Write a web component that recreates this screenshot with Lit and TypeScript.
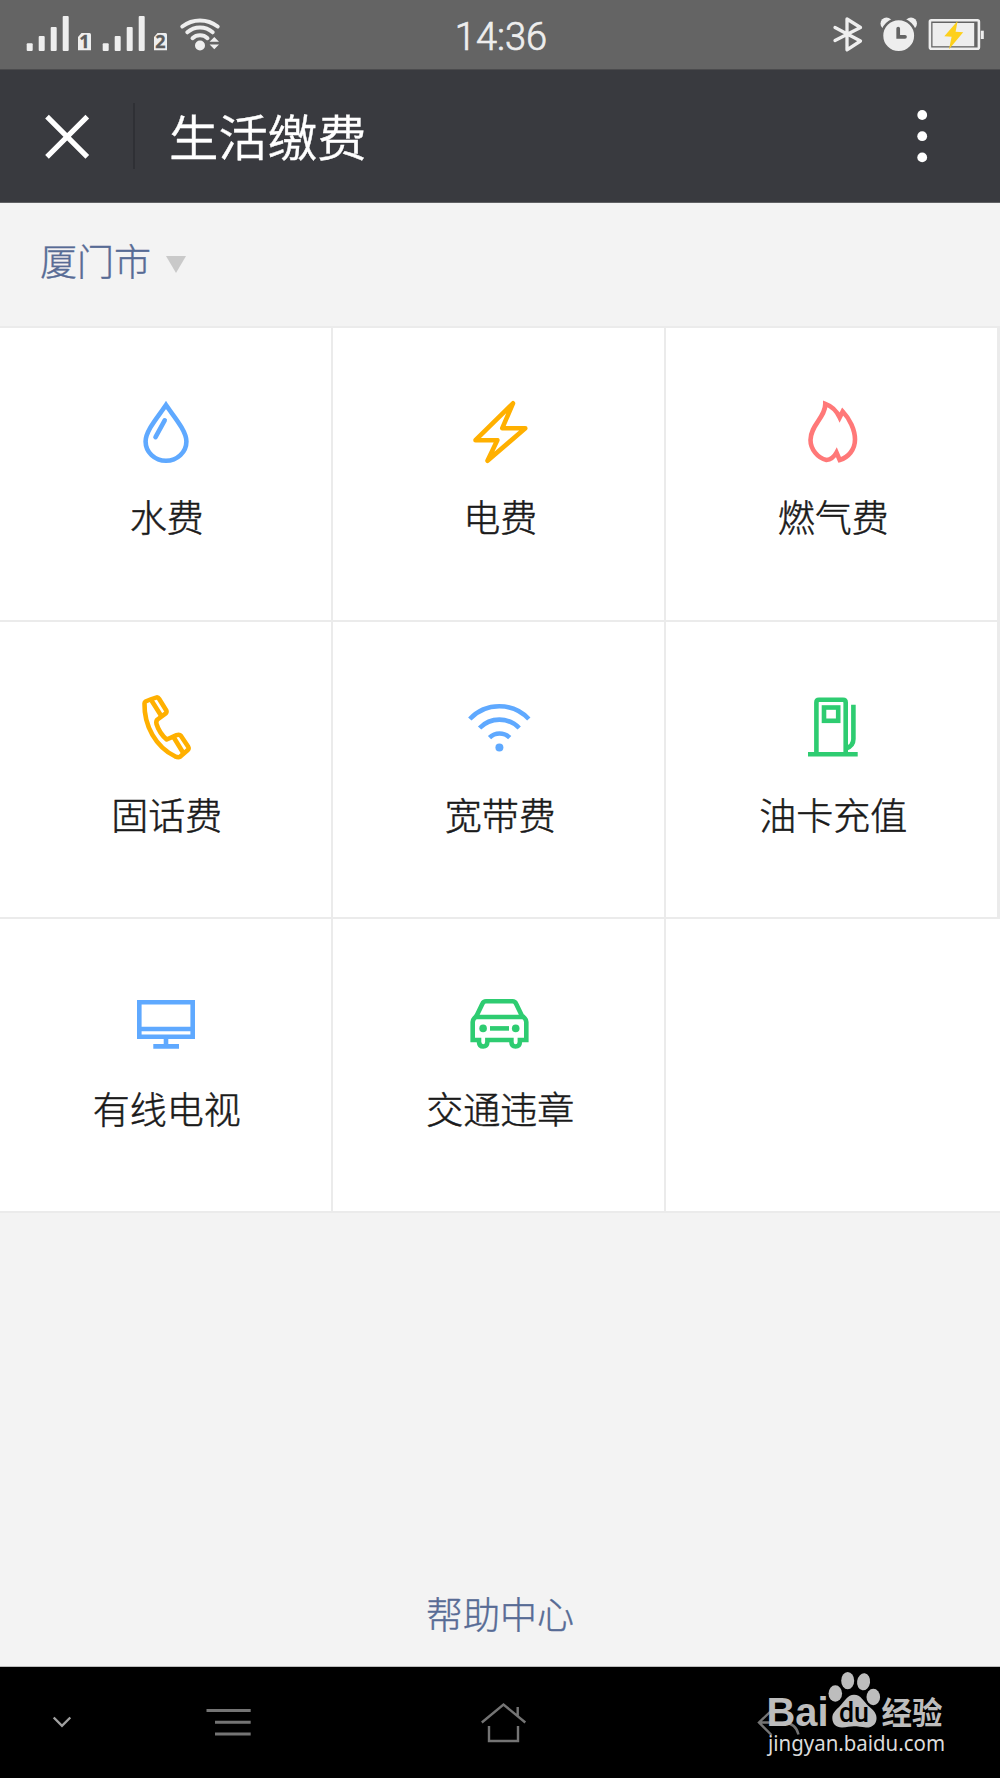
import { LitElement, html, css, svg } from "lit";
import { customElement, property } from "lit/decorators.js";

const BLUE = "#5fa9ff";
const AMBER = "#ffb000";
const CORAL = "#ff7878";
const GREEN = "#2ecc71";

const dropIcon = svg`
  <path d="M166 405C159 415.500 145.600 430.500 145.600 441.500A20.400 19.300 0 0 0 186.400 441.500C186.400 430.500 173 415.500 166 405Z"/>
  <path d="M164.700 420.300L155.500 437.200" stroke-linecap="round"/>`;
const boltIcon = svg`
  <path stroke-linejoin="round" d="M513 403.300L502.300 428.200H525.300L487.500 460.800L497.300 440.200H475.500Z"/>`;
const flameIcon = svg`
  <path stroke-miterlimit="3" d="M825.300 403.800C831.500 406 837 411.500 839.700 417.500L842.700 411.500C849.500 418.500 855 430 855 439.500C855 449.500 848.500 457.300 839.700 460L836.500 452.500C834 457 830 459.800 826.500 460C817.500 458 810.500 449 810.500 440C810.500 425 825.500 417.500 825.300 403.800Z"/>`;
const phoneIcon = svg`
  <path stroke-linejoin="round" d="M145.500 701.500Q151 699 156 697.600Q158 697 159.200 699L166.300 710.500Q167 712 165.700 713.300L157.500 719.500Q155.800 721 156.500 724C158.500 730.500 162 735.500 166.700 739.500L176.500 735.200Q179.500 734 181 736L188.200 746.800Q189.200 748.500 187.800 750L180 756.800Q178.300 757.800 175 756.300C156 747 144 726 144.500 703.500Q144.500 702.300 145.500 701.500Z"/>
  <path d="M151.500 700.500L161.300 716M173.500 737L183.300 753"/>`;
const wifiIcon = svg`
  <path d="M469.800 719A40.600 40.600 0 0 1 528.800 719M479.600 728A27.500 27.500 0 0 1 519.200 728M489.500 737.600A14.500 14.500 0 0 1 509.700 737.600"/>
  <circle cx="499.400" cy="747.400" r="4" fill=${BLUE} stroke="none"/>`;
const pumpIcon = svg`
  <path d="M816.400 754V702.500Q816.400 699.800 819 699.800H843Q845.700 699.800 845.700 702.500V754M808 754.200H857.700"/>
  <rect x="824" y="707.500" width="14.200" height="13.300"/>
  <path d="M853.400 704.700V739Q853.400 746 846 748.500"/>`;
const tvIcon = svg`
  <path d="M139.300 1002.300H192.700V1036.800H139.300ZM139.300 1029H192.700M166 1037V1046M153.300 1046.400H179"/>`;
const carIcon = svg`
  <path d="M476 1017L482.500 1003.500Q483.500 1001.200 486 1001.200H512.500Q515 1001.200 516 1003.500L522.500 1017M475.500 1017H523"/>
  <path d="M476.500 1016Q472.700 1019 472.700 1022V1040H479V1042Q479.300 1046.500 483.200 1046.500Q487.200 1046.500 487.400 1042V1040H511.400V1042Q511.600 1046.500 515.500 1046.500Q519.700 1046.500 519.900 1042V1040H526.300V1022Q526.300 1019 522.500 1016"/>
  <path d="M490 1028.400H509"/>
  <circle cx="483.100" cy="1028.400" r="3.800" fill=${GREEN} stroke="none"/>
  <circle cx="515.700" cy="1028.400" r="3.800" fill=${GREEN} stroke="none"/>`;

interface Service {
  label: string;
  color: string;
  box: string;
  icon: unknown;
}

const ROWS: { cls: string; items: Service[] }[] = [
  {
    cls: "first",
    items: [
      { label: "水费", color: BLUE, box: "130 396 72 72", icon: dropIcon },
      { label: "电费", color: AMBER, box: "464 396 72 72", icon: boltIcon },
      { label: "燃气费", color: CORAL, box: "797 396 72 72", icon: flameIcon },
    ],
  },
  {
    cls: "second",
    items: [
      { label: "固话费", color: AMBER, box: "130 692 72 72", icon: phoneIcon },
      { label: "宽带费", color: BLUE, box: "464 692 72 72", icon: wifiIcon },
      { label: "油卡充值", color: GREEN, box: "797 692 72 72", icon: pumpIcon },
    ],
  },
  {
    cls: "third",
    items: [
      { label: "有线电视", color: BLUE, box: "130 988 72 72", icon: tvIcon },
      { label: "交通违章", color: GREEN, box: "464 988 72 72", icon: carIcon },
    ],
  },
];

@customElement("status-bar")
class StatusBar extends LitElement {
  static styles = css`
    :host {
      display: grid;
      grid-template-columns: 1fr auto 1fr;
      height: 69px;
      background: #646464;
      border-bottom: 1px solid #4b4b4d;
      color: #eee;
    }
    svg { display: block; height: 69px; }
    .left { width: 210px; margin-left: 20px; }
    .right { width: 170px; margin-right: 10px; justify-self: end; }
    .sim { font: bold 18px "Noto Sans", sans-serif; fill: #5c5c5c; stroke: #5c5c5c; stroke-width: 0.3; }
    .time {
      font: 38px/66px Roboto, sans-serif;
      font-weight: 300;
      padding: 4px 0 0 2px;
      height: 65px;
      -webkit-text-stroke: 0.7px #eee;
    }
  `;

  private signal(dx: number, sim: string) {
    return svg`
      <g transform="translate(${dx} 0)">
        <g fill="#eee">
          <rect x="26.700" y="43.300" width="6" height="7.800" rx="1"/>
          <rect x="38.700" y="36" width="6" height="15" rx="1"/>
          <rect x="50.700" y="27" width="6" height="24" rx="1"/>
          <rect x="62.700" y="16" width="6" height="35" rx="1"/>
          <path d="M81.500 33H89.500Q91 33 91 34.500V50.300H78V37Z"/>
        </g>
        <text class="sim" x="84.300" y="48.300" text-anchor="middle">${sim}</text>
      </g>`;
  }

  render() {
    return html`
      <svg class="left" viewBox="20 0 210 69">
        ${this.signal(0, "1")} ${this.signal(76, "2")}
        <g fill="none" stroke="#eee" stroke-width="4" stroke-linecap="round">
          <path d="M182.300 26.500A29 29 0 0 1 217.700 26.500M187.300 32.300A19.500 19.500 0 0 1 212.700 32.300M192.500 38.200A11 11 0 0 1 207.500 38.200"/>
        </g>
        <circle cx="200" cy="45.500" r="5" fill="#eee"/>
        <path fill="#eee" d="M214.300 37L219 41.700H209.600ZM209.600 44.500H219L214.300 49.300Z"/>
      </svg>
      <div class="time">14:36</div>
      <svg class="right" viewBox="820 0 170 69">
        <path fill="none" stroke="#eee" stroke-width="3.300" stroke-linecap="round" stroke-linejoin="round"
          d="M835 27.500L860.500 41L847 49.800V19L860.500 27.500L835 40.500"/>
        <circle cx="886.500" cy="23.500" r="6" fill="#eee"/>
        <circle cx="911" cy="23.500" r="6" fill="#eee"/>
        <circle cx="898.700" cy="35.700" r="16.700" fill="#eee" stroke="#646464" stroke-width="2.600"/>
        <path fill="none" stroke="#646464" stroke-width="3.700" stroke-linecap="round" d="M898.200 28.500V36.800H905"/>
        <rect x="929.900" y="20.200" width="49" height="28.600" rx="1.500" fill="none" stroke="#eee" stroke-width="2.600"/>
        <rect x="932.500" y="23" width="41.700" height="23.200" fill="#eee"/>
        <rect x="980.800" y="30.700" width="3" height="8.300" fill="#eee"/>
        <path fill="#fdd01c" d="M957.600 21L944.300 36.300L951.600 36.800L949 49.200L963.200 32.300L955.600 31.700Z"/>
      </svg>
    `;
  }
}

@customElement("title-bar")
class TitleBar extends LitElement {
  static styles = css`
    :host {
      display: flex;
      align-items: center;
      height: 132px;
      background: #393a3f;
      border-bottom: 1px solid #606164;
      color: #fff;
    }
    svg { display: block; }
    .close { width: 50px; height: 50px; margin-left: 42px; margin-top: 2px; }
    .divider { width: 2px; height: 66px; margin-left: 41px; background: #2f3035; }
    .title {
      margin: 0 auto 0 34px;
      padding-bottom: 3px;
      font: 49.4px/70px "Noto Sans CJK SC", sans-serif;
      font-weight: 350;
      -webkit-text-stroke: 0.4px #fff;
    }
    .more { width: 20px; height: 60px; margin-right: 68px; }
  `;

  render() {
    return html`
      <svg class="close" viewBox="42 112 50 50">
        <path d="M47 116.700L87.300 156.800M87.300 116.700L47 156.800" stroke="#fff" stroke-width="5.200" fill="none"/>
      </svg>
      <div class="divider"></div>
      <div class="title">生活缴费</div>
      <svg class="more" viewBox="912 106 20 60" fill="#fff">
        <circle cx="922.200" cy="115" r="4.900"/>
        <circle cx="922.200" cy="136.200" r="4.900"/>
        <circle cx="922.200" cy="157.400" r="4.900"/>
      </svg>
    `;
  }
}

@customElement("service-cell")
class ServiceCell extends LitElement {
  @property({ attribute: false }) service!: Service;

  static styles = css`
    :host { display: flex; flex-direction: column; align-items: center; }
    svg { display: block; width: 72px; height: 72px; flex: none; }
    .label {
      margin-top: var(--label-gap);
      padding-left: 1.5px;
      font: 37px/44px "Noto Sans CJK SC", sans-serif;
      font-weight: 300;
      -webkit-text-stroke: 0.5px #1a1a1a;
      color: #1a1a1a;
      white-space: nowrap;
    }
  `;

  render() {
    const s = this.service;
    return html`
      <svg viewBox=${s.box} fill="none" stroke=${s.color} stroke-width="4.600">${s.icon}</svg>
      <div class="label">${s.label}</div>
    `;
  }
}

@customElement("nav-bar")
class NavBar extends LitElement {
  static styles = css`
    :host {
      display: flex;
      align-items: center;
      position: relative;
      height: 111px;
      background: #000;
    }
    svg { display: block; flex: none; }
    .nav { height: 56px; fill: none; stroke: #747474; stroke-width: 2.4; }
    .down { width: 24px; margin-left: 50px; stroke: #a0a0a0; }
    .menu { width: 56px; margin-left: 126px; stroke-width: 3; }
    .key { width: 56px; margin-left: 220px; }
    .mark { position: absolute; left: 760px; top: 0; width: 200px; height: 111px; }
    .bai { font: bold 40px "Liberation Sans", sans-serif; fill: #bdbdbd; }
    .du { font: 500 27px Roboto, sans-serif; fill: #000; }
    .jy { font: bold 31px "Noto Sans CJK SC", sans-serif; fill: #bdbdbd; }
    .url { font: 22px "Noto Sans", sans-serif; fill: #dcdcdc; }
  `;

  render() {
    return html`
      <svg class="nav down" viewBox="50 1694.500 24 56"><path d="M53.700 1717L62 1725.300L70.300 1717"/></svg>
      <svg class="nav menu" viewBox="200 1694.500 56 56">
        <path d="M206.500 1710H250.700M215 1721.700H250.700M215 1733.400H250.700"/>
      </svg>
      <svg class="nav key" viewBox="476 1694.500 56 56">
        <path d="M481.800 1722L503.500 1704L525.300 1722M517.700 1706.500V1715.500M489 1725.500V1740.500H518V1725.500"/>
      </svg>
      <svg class="nav key" viewBox="752 1694.500 56 56">
        <path d="M771.500 1710L759 1722L771.500 1734.500M759 1722H784Q796 1723 798.500 1734"/>
      </svg>
      <svg class="mark" viewBox="760 1667 200 111">
        <text class="bai" x="766.500" y="1726" textLength="62" lengthAdjust="spacingAndGlyphs">Bai</text>
        <g fill="#bdbdbd">
          <ellipse cx="835.300" cy="1693.500" rx="6.800" ry="8.300"/>
          <ellipse cx="847.700" cy="1680.700" rx="6.500" ry="8.600"/>
          <ellipse cx="863.600" cy="1681.800" rx="6.500" ry="8.600" transform="rotate(8 863.600 1681.800)"/>
          <ellipse cx="873.300" cy="1697" rx="6.800" ry="8.300"/>
          <path d="M854 1694.800C861 1694.800 863.500 1701.500 868.500 1706C874 1710.500 877 1714 876.500 1719C876 1725 871 1728 866 1727.500C861 1727 858 1726.300 854 1726.300C850 1726.300 847 1727.500 842 1727.500C836 1727.500 832.500 1724 832.300 1718C832.200 1713 836 1710 840 1706C845 1701 847.500 1694.800 854 1694.800Z"/>
        </g>
        <text class="du" x="839" y="1722" textLength="30" lengthAdjust="spacingAndGlyphs">du</text>
        <text class="jy" x="881.500" y="1724" textLength="61" lengthAdjust="spacingAndGlyphs">经验</text>
        <text class="url" x="768" y="1750.500" textLength="177" lengthAdjust="spacingAndGlyphs">jingyan.baidu.com</text>
      </svg>
    `;
  }
}

@customElement("app-root")
class AppRoot extends LitElement {
  static styles = css`
    :host {
      display: flex;
      flex-direction: column;
      width: 1000px;
      height: 1778px;
      overflow: hidden;
      background: #f3f3f3;
    }
    .city {
      display: flex;
      align-items: center;
      height: 113px;
      padding: 0 0 10px 40px;
      gap: 15px;
      color: #576b95;
      font: 37px/50px "Noto Sans CJK SC", sans-serif;
      font-weight: 300;
      -webkit-text-stroke: 0.4px #576b95;
    }
    .caret { display: block; width: 20px; height: 17px; margin-top: 10px; }
    .grid { background: #fff; border-top: 2px solid #ebebeb; }
    .row {
      display: grid;
      grid-template-columns: 333px 333px 334px;
      box-sizing: border-box;
      border-bottom: 2px solid #ebebeb;
    }
    .first { height: 294px; --label-gap: 26px; --icon-top: 68px; }
    .second { height: 297px; --label-gap: 28px; --icon-top: 70px; }
    .third { height: 294px; --label-gap: 26px; --icon-top: 69px; }
    .cell { padding: var(--icon-top) 0 0 2px; border-right: 2px solid #ebebeb; }
    .cell:nth-child(1) { padding-left: 1px; }
    .cell:nth-child(3) { border-right-width: 3px; }
    .spacer { flex: 1; }
    .help {
      text-align: center;
      color: #576b95;
      font: 37px/50px "Noto Sans CJK SC", sans-serif;
      font-weight: 300;
      -webkit-text-stroke: 0.4px #576b95;
      padding-bottom: 28px;
      border-bottom: 1px solid #bdbdbd;
    }
  `;

  render() {
    return html`
      <status-bar></status-bar>
      <title-bar></title-bar>
      <div class="city">
        <span>厦门市</span>
        <svg class="caret" viewBox="0 0 20 17"><path d="M0 0H20L10 17Z" fill="#c9c9c9"/></svg>
      </div>
      <div class="grid">
        ${ROWS.map(
          (row) => html`<div class="row ${row.cls}">
            ${row.items.map((s) => html`<service-cell class="cell" .service=${s}></service-cell>`)}
          </div>`
        )}
      </div>
      <div class="spacer"></div>
      <div class="help">帮助中心</div>
      <nav-bar></nav-bar>
    `;
  }
}
